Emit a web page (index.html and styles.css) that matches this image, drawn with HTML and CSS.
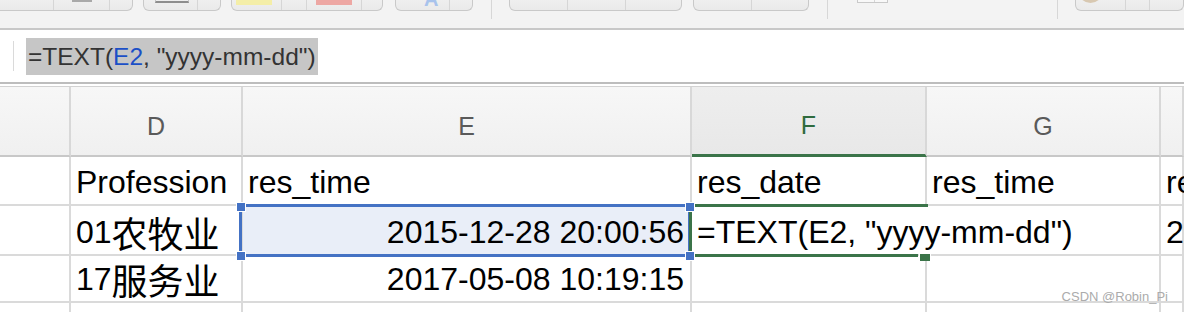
FILE: index.html
```html
<!DOCTYPE html>
<html lang="en">
<head>
  <meta charset="UTF-8">
  <meta name="viewport" content="width=device-width, initial-scale=1.0">
  <link rel="stylesheet" href="styles.css">
</head>
<body>
  <!-- Ribbon (bottom edge only) -->
  <div class="toolbar">
    <div class="tb-group g1">
      <span class="seg w62"></span>
      <span class="seg w56"><i class="dash"></i></span>
      <span class="seg w23"></span>
    </div>
    <div class="tb-group g2">
      <span class="seg w53"><i class="border-icon"></i></span>
      <span class="seg w23"></span>
    </div>
    <div class="tb-group g3">
      <span class="seg w49"><i class="swatch fill"></i></span>
      <span class="seg w25"></span>
      <span class="seg w55"><i class="swatch font"></i></span>
      <span class="seg w21"></span>
    </div>
    <div class="tb-group g4">
      <span class="seg w53"><i class="letter-a">A</i></span>
      <span class="seg w23"></span>
    </div>
    <span class="tb-sep s1"></span>
    <div class="tb-group g5">
      <span class="seg w57"></span>
      <span class="seg w58"></span>
      <span class="seg w56"></span>
    </div>
    <div class="tb-group g6">
      <span class="seg w57"></span>
      <span class="seg w57"></span>
    </div>
    <span class="tb-sep s2"></span>
    <div class="tb-box">
      <span class="seg w16"></span>
      <span class="seg w13"></span>
    </div>
    <span class="tb-sep s3"></span>
    <div class="tb-group g7">
      <span class="seg w49"><i class="style-dot"></i></span>
      <span class="seg w24"></span>
      <span class="seg w34"></span>
    </div>
  </div>

  <!-- Formula bar -->
  <div class="formula-bar">
    <span class="fx-line"></span>
    <span class="fx-text">=TEXT(<span class="ref">E2</span>, "yyyy-mm-dd")</span>
  </div>

  <!-- Sheet -->
  <div class="sheet">
    <div class="col-head"></div>
    <div class="col-head">D</div>
    <div class="col-head">E</div>
    <div class="col-head active">F</div>
    <div class="col-head">G</div>
    <div class="col-head"></div>

    <div class="cell"></div>
    <div class="cell">Profession</div>
    <div class="cell">res_time</div>
    <div class="cell">res_date</div>
    <div class="cell">res_time</div>
    <div class="cell edge">re</div>

    <div class="cell"></div>
    <div class="cell">01<span class="cjk">农牧业</span></div>
    <div class="cell num ref-cell">2015-12-28 20:00:56</div>
    <div class="cell editing">=TEXT(E2, "yyyy-mm-dd")</div>
    <div class="cell"></div>
    <div class="cell edge">2</div>

    <div class="cell"></div>
    <div class="cell">17<span class="cjk">服务业</span></div>
    <div class="cell num">2017-05-08 10:19:15</div>
    <div class="cell"></div>
    <div class="cell"></div>
    <div class="cell"></div>

    <div class="cell last"></div>
    <div class="cell last"></div>
    <div class="cell last"></div>
    <div class="cell last"></div>
    <div class="cell last"></div>
    <div class="cell last"></div>

    <!-- Reference highlight (E2) -->
    <div class="ref-box"></div>
    <i class="handle h-tl"></i>
    <i class="handle h-bl"></i>
    <i class="handle h-tr"></i>
    <i class="handle h-br"></i>

    <!-- Active cell (F2) -->
    <i class="edit-top"></i>
    <i class="edit-bottom"></i>
    <i class="edit-left"></i>
    <i class="fill-handle"></i>
  </div>

  <div class="watermark">CSDN @Robin_Pi</div>
</body>
</html>
```

FILE: styles.css
```css
/* General */
body {
  margin: 0;
  width: 1184px;
  height: 312px;
  overflow: hidden;
  position: relative;
  background-color: #FFFFFF;
  font-family: "Liberation Sans", "Noto Sans CJK SC", sans-serif;
  color: #000000;
}

/* Ribbon */
.toolbar {
  height: 28px;
  background-color: #F3F3F3;
  border-bottom: 2px solid #C8C8C8;
  display: flex;
  align-items: flex-start;
  overflow: hidden;
}

.tb-group, .tb-box {
  display: flex;
  flex-shrink: 0;
  height: 10px;
  border: 1px solid #C9C9C9;
  border-top: none;
  border-radius: 0 0 6px 6px;
  background: linear-gradient(#EFEFEF, #EAEAEA);
}

.seg {
  display: block;
  flex-shrink: 0;
  box-sizing: border-box;
  height: 100%;
}

.seg + .seg {
  border-left: 1px solid #D6D6D6;
}

.w13 { width: 13px; }
.w16 { width: 16px; }
.w21 { width: 21px; }
.w23 { width: 23px; }
.w24 { width: 24px; }
.w25 { width: 25px; }
.w34 { width: 34px; }
.w49 { width: 49px; }
.w53 { width: 53px; }
.w55 { width: 55px; }
.w56 { width: 56px; }
.w57 { width: 57px; }
.w58 { width: 58px; }
.w62 { width: 62px; }

.g1 { margin-left: -10px; }
.g2 { margin-left: 10px; }
.g3 { margin-left: 10px; }
.g4 { margin-left: 12px; }
.g5 { margin-left: 17px; }
.g6 { margin-left: 11px; }
.g7 { margin-left: 17px; }

.tb-sep {
  flex-shrink: 0;
  width: 1px;
  height: 19px;
  background-color: #D7D7D7;
}

.s1 { margin-left: 18px; }
.s2 { margin-left: 18px; }
.s3 { margin-left: 169px; }

.tb-box {
  margin-left: 29px;
  height: 2px;
  border-radius: 0;
  background: #F8F8F8;
}

.dash {
  display: block;
  margin-left: 18px;
  width: 20px;
  height: 2px;
  background-color: #A9A9A9;
}

.border-icon {
  display: block;
  margin-left: 11px;
  width: 34px;
  height: 3px;
  box-sizing: border-box;
  border-bottom: 2px solid #8E8E8E;
  border-left: 1px solid #C4C4C4;
  border-right: 1px solid #C4C4C4;
}

.swatch {
  display: block;
  width: 36px;
  height: 5px;
}

.swatch.fill {
  margin-left: 4px;
  background-color: #F4EEA8;
}

.swatch.font {
  margin-left: 9px;
  background-color: #EDA7A3;
}

.letter-a {
  display: block;
  margin: -11px 0 0 28px;
  font-style: normal;
  font-weight: bold;
  font-size: 20px;
  line-height: 20px;
  color: #A8C3EC;
}

.style-dot {
  display: block;
  margin: -22px 0 0 2px;
  width: 25px;
  height: 25px;
  border-radius: 50%;
  background-color: #D8C8B1;
}

/* Formula bar */
.formula-bar {
  height: 52px;
  display: flex;
  align-items: center;
  padding-left: 13px;
  border-bottom: 2px solid #BDBDBD;
  margin-bottom: 2px;
}

.fx-line {
  width: 1px;
  height: 30px;
  background-color: #DADADA;
}

.fx-text {
  margin-left: 12px;
  padding: 0 2px;
  background-color: #C6C6C6;
  font-size: 24.5px;
  line-height: 37px;
  color: #333333;
  white-space: nowrap;
}

.fx-text .ref {
  color: #1B4FC6;
}

/* Sheet */
.sheet {
  position: relative;
  height: 225px;
  overflow: hidden;
  border-top: 1px solid #D2D2D2;
  display: grid;
  grid-template-columns: 71px 172px 449px 235px 234px minmax(0, 1fr);
  grid-template-rows: 70px 49px 50px 47px 1fr;
}

.col-head {
  box-sizing: border-box;
  border-right: 2px solid #D8D8D8;
  border-bottom: 2px solid #C8C8C8;
  background: linear-gradient(#F7F7F7, #F0F0F0);
  display: flex;
  justify-content: center;
  align-items: center;
  padding-top: 10px;
  font-size: 25px;
  color: #5A5A5A;
}

.col-head.active {
  background: linear-gradient(#EEEEEE, #E8E8E8);
  border-bottom: 3px solid #3B7449;
  color: #2F6B3E;
}

.cell {
  box-sizing: border-box;
  border-right: 2px solid #DADADA;
  border-bottom: 2px solid #DADADA;
  display: flex;
  align-items: flex-end;
  padding: 0 6px 6px 5px;
  font-size: 32px;
  line-height: 32px;
  white-space: nowrap;
  min-width: 0;
}

.cell.last {
  border-bottom: none;
}

.cell.edge {
  padding-right: 0;
}

.cell .cjk {
  font-family: "Noto Sans CJK SC", sans-serif;
  font-size: 36px;
}

.cell.num {
  justify-content: flex-end;
}

.cell.ref-cell {
  background-color: #E9EEF8;
}

.cell.editing {
  border-right-color: transparent;
  position: relative;
  z-index: 1;
}

/* Selection overlays */
.ref-box {
  position: absolute;
  left: 239px;
  top: 117px;
  width: 452px;
  height: 53px;
  box-sizing: border-box;
  border: 3px solid #4472C4;
  z-index: 2;
}

.handle {
  position: absolute;
  width: 8px;
  height: 8px;
  background-color: #4472C4;
  border: 1px solid #FFFFFF;
  z-index: 3;
}

.h-tl { left: 236px; top: 115px; }
.h-bl { left: 236px; top: 164px; }
.h-tr { left: 685px; top: 115px; }
.h-br { left: 685px; top: 164px; }

.edit-top, .edit-bottom, .edit-left, .fill-handle {
  position: absolute;
  background-color: #3B7449;
  z-index: 3;
}

.edit-top { left: 695px; top: 117px; width: 233px; height: 3px; }
.edit-bottom { left: 695px; top: 167px; width: 223px; height: 3px; }
.edit-left { left: 689px; top: 125px; width: 3px; height: 39px; }

.fill-handle {
  left: 919px;
  top: 166px;
  width: 10px;
  height: 7px;
  border: 1px solid #FFFFFF;
  border-bottom: none;
}

/* Watermark */
.watermark {
  position: absolute;
  right: 16px;
  bottom: 8px;
  font-size: 13px;
  color: #ABABAB;
  z-index: 5;
}
```
